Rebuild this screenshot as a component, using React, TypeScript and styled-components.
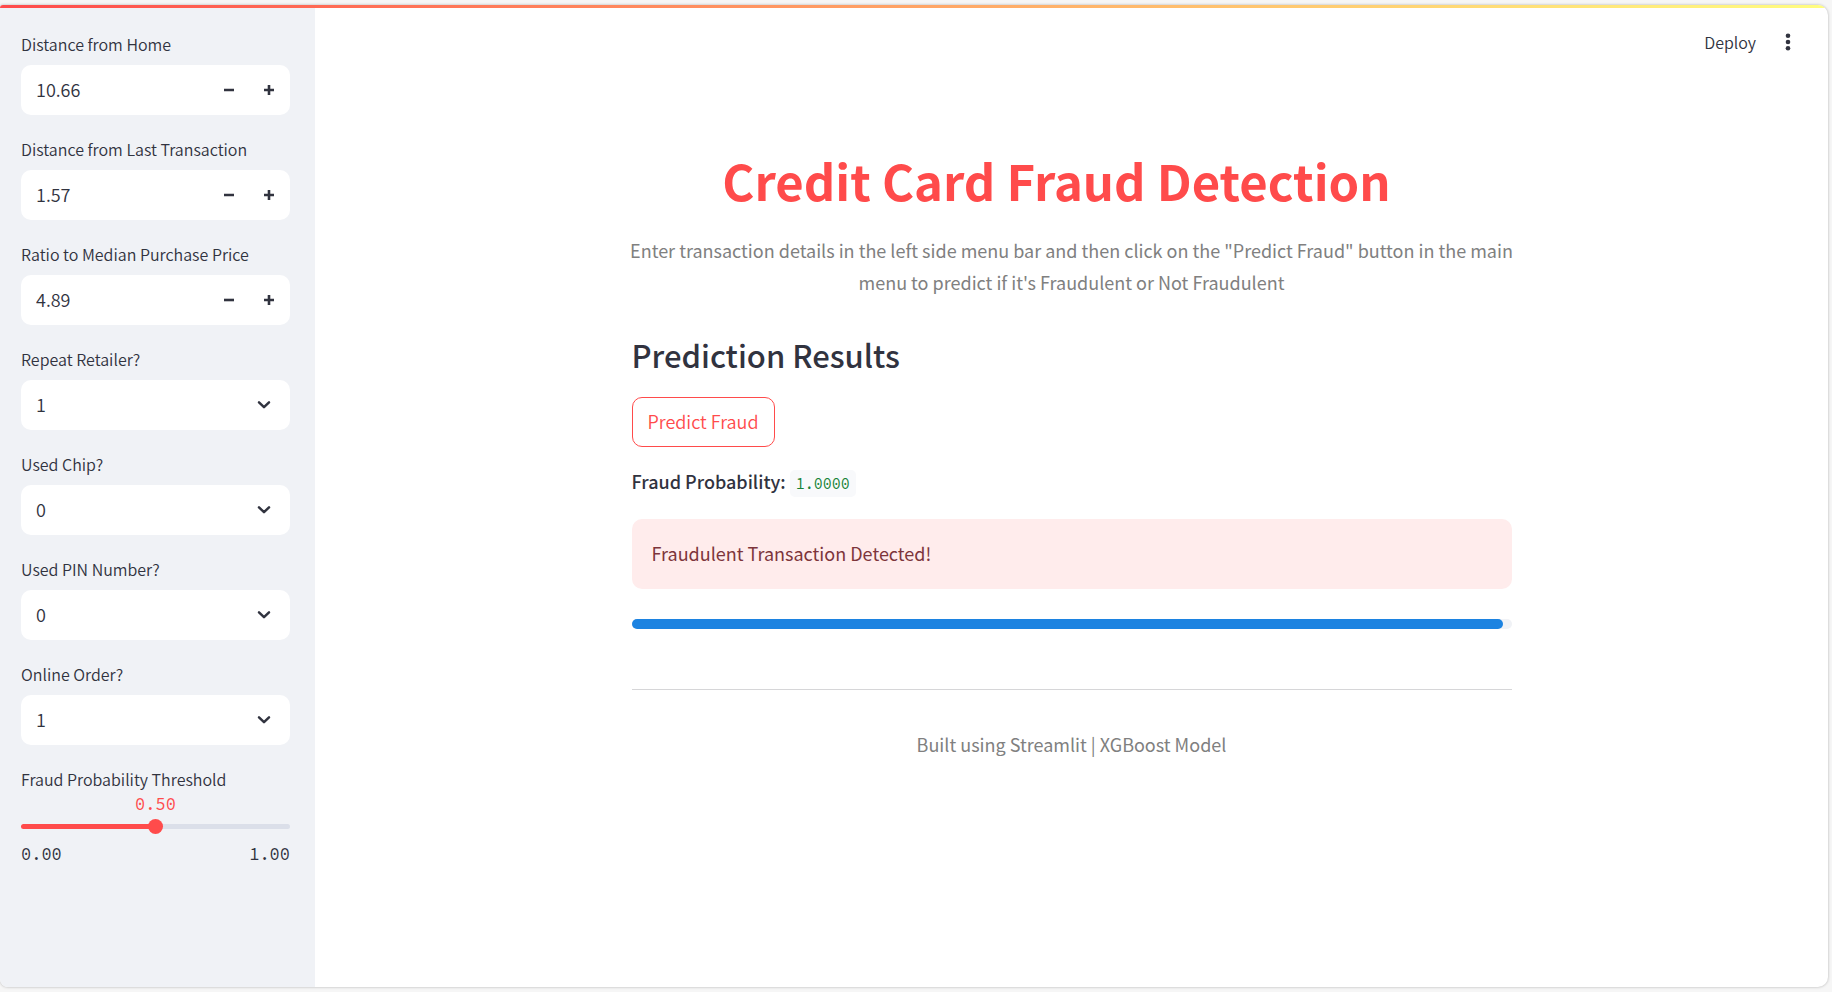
import React, { useState } from "react";
import styled, { createGlobalStyle } from "styled-components";

const sans = `"Source Sans Pro", "Noto Sans CJK SC", sans-serif`;
const mono = `"Source Code Pro", "Liberation Mono", monospace`;
const ink = "#31333f";
const red = "#ff4b4b";

const GlobalStyle = createGlobalStyle`
  *, *::before, *::after { box-sizing: border-box; }
  body {
    margin: 0;
    background: #f6f6f6;
    color: ${ink};
    font-family: ${sans};
    font-size: 18px;
    line-height: 32px;
  }
  button, input, select { font: inherit; color: inherit; }
`;

const Page = styled.div`
  min-height: 100vh;
  display: flex;
  padding: 5px 4px;
  padding-left: 0;
`;

const Frame = styled.div`
  flex: 1;
  display: flex;
  flex-direction: column;
  overflow: hidden;
  background: #fff;
  border-radius: 3px 10px 10px 8px;
  box-shadow: 0 0 3px rgba(0, 0, 0, 0.28);
`;

const TopStripe = styled.div`
  height: 3px;
  background: linear-gradient(90deg, ${red}, #fffd80);
`;

const Columns = styled.div`
  flex: 1;
  display: flex;
`;

const Sidebar = styled.aside`
  width: 315px;
  flex-shrink: 0;
  display: flex;
  flex-direction: column;
  gap: 19px;
  padding: 21px 25px 21px 21px;
  background: #f0f2f6;
  font-weight: 350;
`;

const Field = styled.div`
  display: flex;
  flex-direction: column;
  gap: 6px;
`;

const Label = styled.label`
  font-size: 16px;
  line-height: 30px;
`;

const NumberBox = styled.div`
  display: flex;
  height: 50px;
  padding-right: 1px;
  background: #fff;
  border-radius: 10px;
`;

const NumberInput = styled.input`
  flex: 1;
  min-width: 0;
  padding: 0 0 3px 15px;
  border: 0;
  outline: 0;
  background: transparent;
  appearance: textfield;
  &::-webkit-inner-spin-button { appearance: none; }
`;

const StepButton = styled.button`
  width: 40px;
  display: grid;
  place-items: center;
  padding: 0;
  border: 0;
  background: transparent;
  cursor: pointer;
`;

const SelectBox = styled.div`
  display: grid;
  align-items: center;
  & > * { grid-area: 1 / 1; }
  & > svg { justify-self: end; margin-right: 19px; pointer-events: none; }
`;

const Select = styled.select`
  width: 100%;
  height: 50px;
  padding: 0 40px 3px 15px;
  border: 0;
  border-radius: 10px;
  background: #fff;
  appearance: none;
`;

const SliderValue = styled.output`
  display: block;
  color: ${red};
  font: 17px/20px ${mono};
  text-align: center;
`;

const Slider = styled.input<{ $fill: number }>`
  width: 100%;
  height: 15px;
  margin: 5px 0 0;
  appearance: none;
  background: transparent;
  &::-webkit-slider-runnable-track {
    height: 5px;
    border-radius: 5px;
    background: linear-gradient(90deg, ${red} ${(p) => p.$fill}%, #dbdfe9 ${(p) => p.$fill}%);
  }
  &::-webkit-slider-thumb {
    appearance: none;
    width: 15px;
    height: 15px;
    margin-top: -5px;
    border-radius: 50%;
    background: ${red};
  }
`;

const SliderField = styled.div`
  display: flex;
  flex-direction: column;
`;

const SliderLimits = styled.div`
  display: flex;
  justify-content: space-between;
  margin-top: 10px;
  font: 17px/20px ${mono};
`;

const Main = styled.main`
  flex: 1;
  min-width: 0;
  display: flex;
  flex-direction: column;
`;

const Toolbar = styled.header`
  display: flex;
  justify-content: flex-end;
  align-items: center;
  gap: 22px;
  height: 68px;
  padding: 0 30px;
`;

const ToolButton = styled.button`
  display: grid;
  place-items: center;
  min-width: 20px;
  padding: 0;
  border: 0;
  background: transparent;
  font-size: 16px;
  font-weight: 350;
  cursor: pointer;
`;

const Content = styled.div`
  width: 100%;
  max-width: 880px;
  margin: 0 auto;
  padding-top: 71px;
`;

const Title = styled.h1`
  margin: 0;
  padding-right: 30px;
  color: ${red};
  font-size: 49px;
  font-weight: 700;
  line-height: 66px;
  text-align: center;
`;

const Lead = styled.p`
  margin: 21px -8px 0;
  color: #808080;
  text-align: center;
`;

const Heading = styled.h2`
  margin: 33px 0 0;
  font-size: 31px;
  font-weight: 500;
  line-height: 48px;
`;

const PredictButton = styled.button`
  height: 50px;
  margin-top: 18px;
  padding: 0 15px 3px;
  border: 1px solid ${red};
  border-radius: 10px;
  background: #fff;
  color: ${red};
  font-weight: 350;
  cursor: pointer;
`;

const Probability = styled.p`
  margin: 18px 0 22px;
  & > strong { font-weight: 500; }
`;

const Code = styled.code`
  padding: 4px 6px;
  border-radius: 5px;
  background: #f8f9fb;
  color: #158237;
  font: 15px/16px ${mono};
`;

const Alert = styled.div`
  padding: 18px 20px 20px;
  border-radius: 10px;
  background: #ffecec;
  color: #7d353b;
`;

const Progress = styled.progress`
  display: block;
  width: 100%;
  height: 10px;
  margin-top: 30px;
  border: 0;
  appearance: none;
  &::-webkit-progress-bar { background: #f0f2f6; border-radius: 5px; }
  &::-webkit-progress-value { background: #1c83e1; border-radius: 5px; }
`;

const Divider = styled.hr`
  margin: 60px 0 38px;
  border: 0;
  border-top: 1px solid #d6d6d8;
`;

const Footer = styled.footer`
  color: #808080;
  text-align: center;
`;

const Minus = () => (
  <svg width="10" height="10" viewBox="0 0 10 10" aria-hidden="true">
    <path d="M0 3.7h10v2.6H0z" fill={ink} />
  </svg>
);

const Plus = () => (
  <svg width="10" height="10" viewBox="0 0 10 10" aria-hidden="true">
    <path d="M0 3.7h3.7V0h2.6v3.7H10v2.6H6.3V10H3.7V6.3H0z" fill={ink} />
  </svg>
);

const Chevron = () => (
  <svg width="14" height="10" viewBox="0 0 14 10" aria-hidden="true">
    <path d="M2 2.4l5 4.8 5-4.8" fill="none" stroke={ink} strokeWidth="2.5" strokeLinecap="round" strokeLinejoin="round" />
  </svg>
);

const Dots = () => (
  <svg width="6" height="18" viewBox="0 0 6 18" fill={ink} aria-hidden="true">
    <circle cx="3" cy="2.7" r="2.3" />
    <circle cx="3" cy="9" r="2.3" />
    <circle cx="3" cy="15.3" r="2.3" />
  </svg>
);

function NumberField({ id, label, initial }: { id: string; label: string; initial: number }) {
  const [value, setValue] = useState(initial.toFixed(2));
  const step = (by: number) => setValue((Number(value) + by).toFixed(2));
  return (
    <Field>
      <Label htmlFor={id}>{label}</Label>
      <NumberBox>
        <NumberInput id={id} type="number" step="0.01" value={value} onChange={(e) => setValue(e.target.value)} />
        <StepButton type="button" aria-label={`Decrease ${label}`} onClick={() => step(-0.01)}><Minus /></StepButton>
        <StepButton type="button" aria-label={`Increase ${label}`} onClick={() => step(0.01)}><Plus /></StepButton>
      </NumberBox>
    </Field>
  );
}

function ChoiceField({ id, label, initial }: { id: string; label: string; initial: string }) {
  return (
    <Field>
      <Label htmlFor={id}>{label}</Label>
      <SelectBox>
        <Select id={id} defaultValue={initial}>
          <option>0</option>
          <option>1</option>
        </Select>
        <Chevron />
      </SelectBox>
    </Field>
  );
}

export default function App() {
  const [threshold, setThreshold] = useState(0.5);
  return (
    <>
      <GlobalStyle />
      <Page>
        <Frame>
          <TopStripe />
          <Columns>
            <Sidebar>
              <NumberField id="home" label="Distance from Home" initial={10.66} />
              <NumberField id="last" label="Distance from Last Transaction" initial={1.57} />
              <NumberField id="ratio" label="Ratio to Median Purchase Price" initial={4.89} />
              <ChoiceField id="retailer" label="Repeat Retailer?" initial="1" />
              <ChoiceField id="chip" label="Used Chip?" initial="0" />
              <ChoiceField id="pin" label="Used PIN Number?" initial="0" />
              <ChoiceField id="online" label="Online Order?" initial="1" />
              <SliderField>
                <Label htmlFor="threshold">Fraud Probability Threshold</Label>
                <SliderValue htmlFor="threshold">{threshold.toFixed(2)}</SliderValue>
                <Slider
                  id="threshold"
                  type="range"
                  min="0"
                  max="1"
                  step="0.01"
                  value={threshold}
                  $fill={threshold * 100}
                  onChange={(e) => setThreshold(Number(e.target.value))}
                />
                <SliderLimits><span>0.00</span><span>1.00</span></SliderLimits>
              </SliderField>
            </Sidebar>
            <Main>
              <Toolbar>
                <ToolButton type="button">Deploy</ToolButton>
                <ToolButton type="button" aria-label="Main menu"><Dots /></ToolButton>
              </Toolbar>
              <Content>
                <Title>Credit Card Fraud Detection</Title>
                <Lead>
                  Enter transaction details in the left side menu bar and then click on the "Predict Fraud" button in the main menu to predict if it's Fraudulent or Not Fraudulent
                </Lead>
                <Heading>Prediction Results</Heading>
                <PredictButton type="button">Predict Fraud</PredictButton>
                <Probability><strong>Fraud Probability:</strong> <Code>1.0000</Code></Probability>
                <Alert role="alert">Fraudulent Transaction Detected!</Alert>
                <Progress value={0.99} max={1} aria-label="Fraud probability" />
                <Divider />
                <Footer>Built using Streamlit | XGBoost Model</Footer>
              </Content>
            </Main>
          </Columns>
        </Frame>
      </Page>
    </>
  );
}
